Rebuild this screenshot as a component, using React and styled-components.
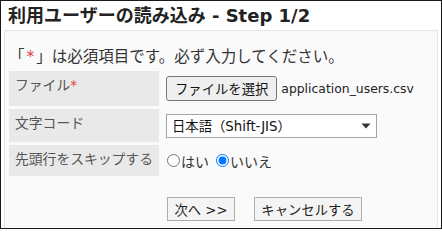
import React from "react";
import styled, { createGlobalStyle } from "styled-components";

const Global = createGlobalStyle`
  html, body { margin: 0; padding: 0; background: #ffffff; }
  body { font-family: "DejaVu Sans", "Noto Sans CJK JP", sans-serif; }
  * { box-sizing: border-box; }
`;

const Dialog = styled.div`
  width: 442px;
  height: 229px;
  border: 1px solid #1a1a1a;
  background: #ffffff;
  display: flex;
  flex-direction: column;
`;

const Title = styled.h1`
  margin: 0;
  padding: 4px 7px 3px;
  height: 29px;
  font-size: 18px;
  line-height: 22px;
  font-weight: bold;
  color: #222222;
  white-space: nowrap;
`;

const Panel = styled.div`
  flex: 1;
  margin: 0 3px;
  border: 1px solid #e4e4e4;
  border-bottom: none;
  background: #fafafa;
  padding: 16px 4px 0;
`;

const Note = styled.p`
  margin: 0 0 4px;
  font-size: 15.5px;
  line-height: 20px;
  color: #333333;
  white-space: nowrap;
`;

const Req = styled.span`
  color: #e0423a;
  margin: ${(p) => (p.$spaced ? "0 2px" : "0")};
`;

const Form = styled.div`
  display: grid;
  grid-template-columns: 150px 1fr;
  grid-template-rows: 35px 33px 31px auto;
  column-gap: 2px;
  row-gap: 3px;
`;

const Label = styled.div`
  background: #e9e9e9;
  padding: 3px 6px 0;
  font-size: 13.8px;
  line-height: 22px;
  color: #555555;
  white-space: nowrap;
`;

const Field = styled.div`
  display: flex;
  align-items: center;
  padding-left: 5px;
  font-size: 13.33px;
  color: #222222;
  white-space: nowrap;
`;

const FileButton = styled.button`
  height: 25px;
  padding: 0 8px;
  border: 1px solid #767676;
  border-radius: 3px;
  background: #efefef;
  font-family: inherit;
  font-size: 13.33px;
  color: #111111;
`;

const FileName = styled.span`
  margin-left: 4px;
  font-size: 12.4px;
  color: #222222;
`;

const Select = styled.div`
  width: 211px;
  height: 24px;
  border: 1px solid #a3a3a3;
  background: #ffffff;
  display: flex;
  align-items: center;
  justify-content: space-between;
  padding: 0 5px 0 5px;
  font-size: 13.33px;
  color: #111111;
`;

const Radio = styled.input`
  width: 13px;
  height: 13px;
  margin: 0 1px 0 ${(p) => p.$ml}px;
  accent-color: #0075ff;
`;

const RadioText = styled.span`
  font-size: 14px;
  color: #333333;
`;

const Actions = styled.div`
  grid-column: 2;
  display: flex;
  gap: 19px;
  padding-left: 6px;
  margin-top: 18px;
`;

const ActionButton = styled.button`
  height: 24px;
  width: ${(p) => p.$w}px;
  padding: 0;
  border: 1px solid #adadad;
  border-radius: 0;
  background: #f4f4f4;
  font-family: inherit;
  font-size: 13.33px;
  color: #222222;
`;

export default function App() {
  return (
    <>
      <Global />
      <Dialog>
        <Title>利用ユーザーの読み込み - Step 1/2</Title>
        <Panel>
          <Note>
            「<Req $spaced>*</Req>」は必須項目です。必ず入力してください。
          </Note>
          <Form>
            <Label>
              ファイル<Req>*</Req>
            </Label>
            <Field>
              <FileButton type="button">ファイルを選択</FileButton>
              <FileName>application_users.csv</FileName>
            </Field>
            <Label>文字コード</Label>
            <Field>
              <Select>
                <span>日本語（Shift-JIS）</span>
                <svg width="10" height="6" viewBox="0 0 10 6">
                  <path d="M0.5 0.5 H9.5 L5 5.5 Z" fill="#333333" />
                </svg>
              </Select>
            </Field>
            <Label>先頭行をスキップする</Label>
            <Field>
              <Radio type="radio" name="skip" $ml={1} readOnly />
              <RadioText>はい</RadioText>
              <Radio type="radio" name="skip" $ml={7} defaultChecked />
              <RadioText>いいえ</RadioText>
            </Field>
            <Actions>
              <ActionButton type="button" $w={68}>次へ &gt;&gt;</ActionButton>
              <ActionButton type="button" $w={108}>キャンセルする</ActionButton>
            </Actions>
          </Form>
        </Panel>
      </Dialog>
    </>
  );
}
